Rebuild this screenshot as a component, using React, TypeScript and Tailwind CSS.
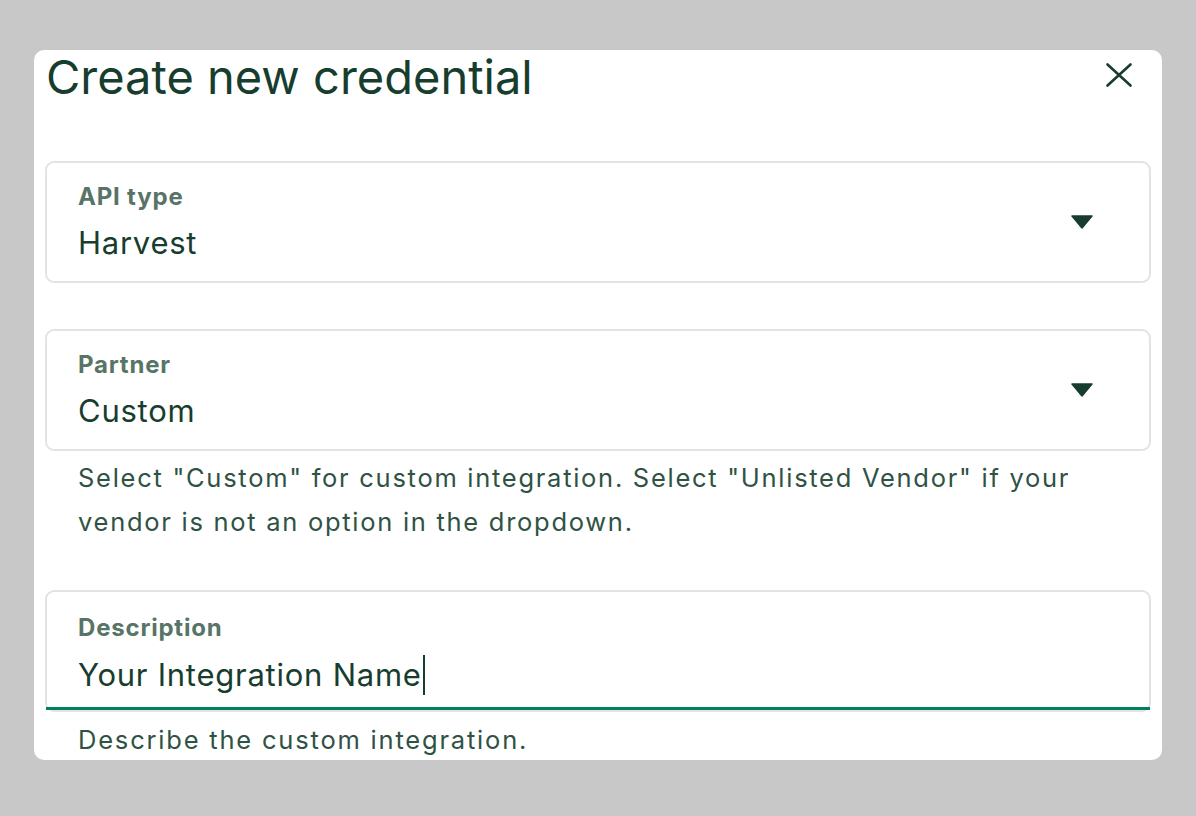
const font = { fontFamily: 'Inter, "Noto Sans", sans-serif' };

function Caret() {
  return (
    <svg width="22" height="14" viewBox="0 0 22 14" className="shrink-0">
      <path d="M1 1 H21 L11 13 Z" fill="#173d2f" stroke="#173d2f" strokeWidth="1.5" strokeLinejoin="round" />
    </svg>
  );
}

function FieldText({ label, value, cursor }: { label: string; value: string; cursor?: boolean }) {
  return (
    <div className="flex-1 flex flex-col">
      <span className="text-[24px] leading-[28px] font-bold tracking-[0.8px] text-[#587467]">{label}</span>
      <span className="text-[31px] leading-[38px] mt-[13px] tracking-[0.75px] text-[#173d2f] flex items-center">
        {value}
        {cursor && <span className="inline-block w-[2px] h-[40px] bg-[#173d2f] ml-[1px]" />}
      </span>
    </div>
  );
}

function SelectField({ label, value }: { label: string; value: string }) {
  return (
    <div className="h-[122px] rounded-[9px] border-2 border-[#e1e4e2] flex items-center pl-[31px] pr-[56px]">
      <FieldText label={label} value={value} />
      <Caret />
    </div>
  );
}

export default function App() {
  return (
    <div className="min-h-screen bg-[#c8c8c8] pt-[50px] pl-[34px]" style={font}>
      <div className="w-[1128px] h-[710px] bg-white rounded-[10px] px-[11px]">
        {/* Header */}
        <div className="flex items-start justify-between pl-[1px] pr-[18px]">
          <h1 className="text-[47px] leading-[54px] text-[#173d2f]">Create new credential</h1>
          <button className="mt-[12px]">
            <svg width="28" height="26" viewBox="0 0 28 26">
              <path d="M2.5 2.5 L25.5 23.5 M25.5 2.5 L2.5 23.5" stroke="#173d2f" strokeWidth="2.6" strokeLinecap="round" />
            </svg>
          </button>
        </div>

        <div className="mt-[57px]">
          <SelectField label="API type" value="Harvest" />
        </div>

        <div className="mt-[46px]">
          <SelectField label="Partner" value="Custom" />
          <p className="pl-[33px] pr-[30px] mt-[5px] text-[25.5px] leading-[44px] tracking-[1.72px] text-[#2f5244]">
            Select "Custom" for custom integration. Select "Unlisted Vendor" if your vendor is not an option in the dropdown.
          </p>
        </div>

        <div className="mt-[46px]">
          <div className="relative h-[122px] rounded-[9px] border-2 border-[#e1e4e2] flex items-center pl-[31px] pt-[6px]">
            <FieldText label="Description" value="Your Integration Name" cursor />
            <div className="absolute left-[-1px] right-[-1px] bottom-[0px] h-[3px] bg-[#008060]" />
          </div>
          <p className="pl-[33px] mt-[12px] text-[25.5px] leading-[32px] tracking-[1.8px] text-[#2f5244]">
            Describe the custom integration.
          </p>
        </div>
      </div>
    </div>
  );
}
